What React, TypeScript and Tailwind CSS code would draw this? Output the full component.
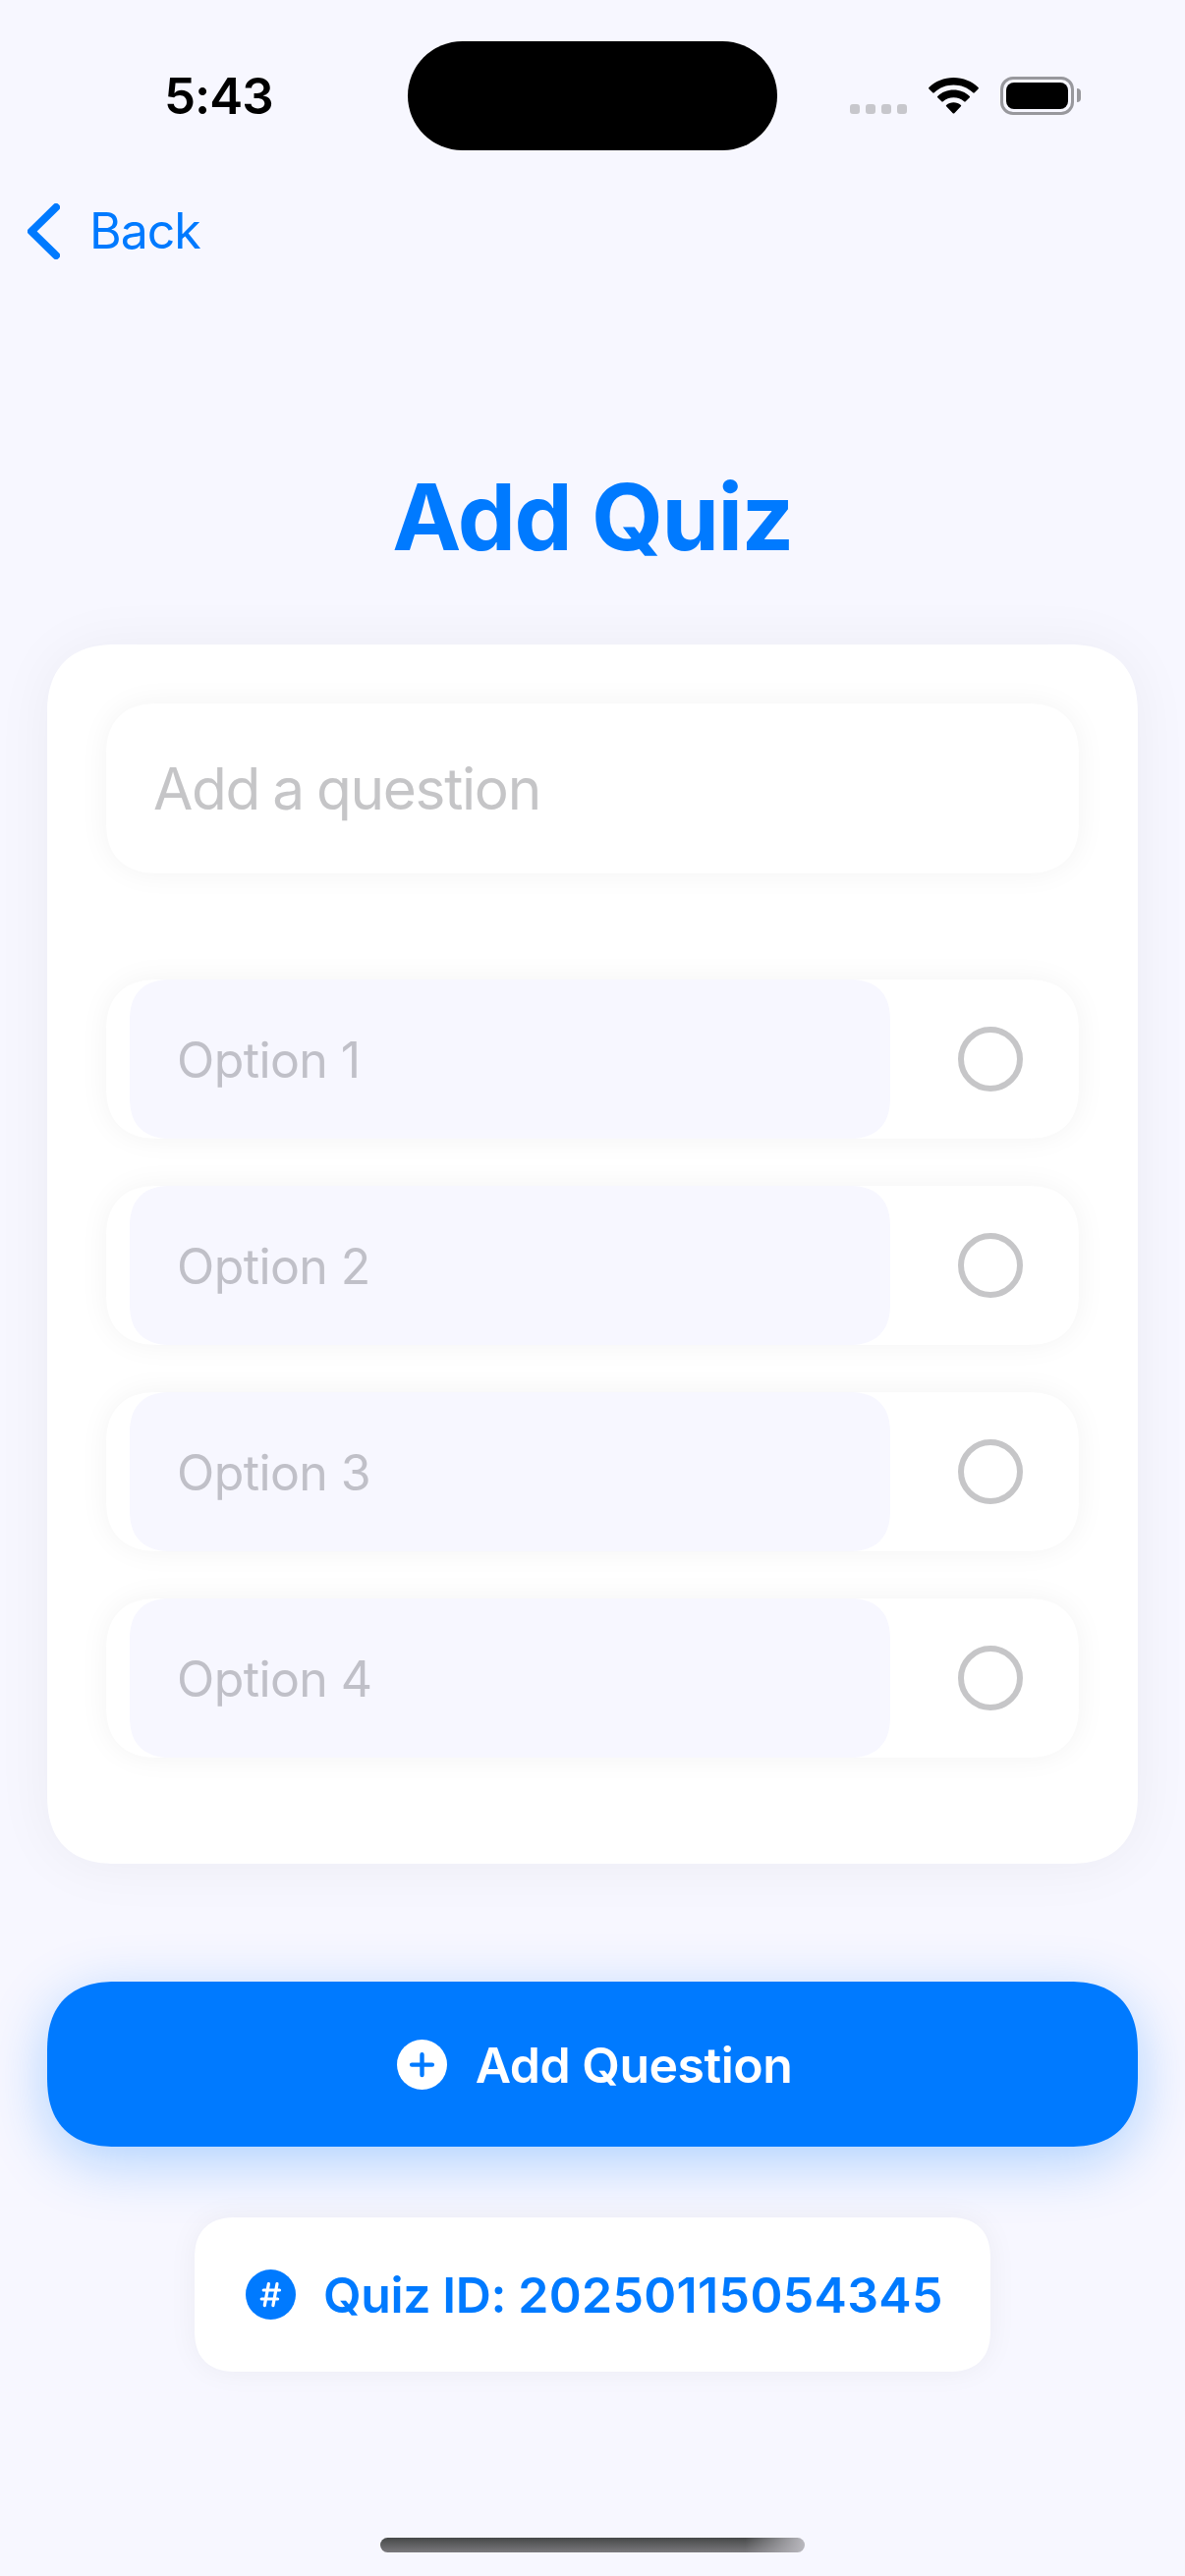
import React from "react";

const options = ["Option 1", "Option 2", "Option 3", "Option 4"];

function StatusBar() {
  return (
    <header className="relative flex h-[194px] items-center justify-between pl-[167px] pr-[106px]">
      <span className="text-[51px] font-semibold leading-none tracking-[-1px] text-black">5:43</span>
      <div className="absolute left-[414.5px] top-[41.5px] h-[111px] w-[376.5px] rounded-full bg-black" />
      <div className="flex items-center">
        <div className="mr-[22px] mt-[28px] flex gap-[6px]">
          {[0, 1, 2, 3].map((i) => (
            <span key={i} className="h-[10px] w-[10px] rounded-[3px] bg-[#c7c7cc]" />
          ))}
        </div>
        <svg className="mr-[22px] h-[37px] w-[51px]" viewBox="0 0 51 37" fill="#000">
          <path d="M25.500 0C35.200 0 44.200 3.700 50.600 10.100Q51.200 10.800 50.600 11.500L46.800 15.300Q46 16 45.200 15.300C39.900 10.300 32.900 7.600 25.500 7.600S11.100 10.300 5.800 15.300Q5 16 4.200 15.300L0.400 11.500Q-0.200 10.800 0.400 10.100C6.800 3.700 15.800 0 25.500 0Z" />
          <path d="M25.500 12.600C31.800 12.600 37.500 15 41.800 18.900Q42.500 19.600 41.800 20.300L37.700 24.300Q37 25 36.200 24.300C33.300 21.700 29.600 20.200 25.500 20.200S17.700 21.700 14.800 24.300Q14 25 13.300 24.300L9.200 20.300Q8.500 19.600 9.200 18.900C13.500 15 19.200 12.600 25.500 12.600Z" />
          <path d="M25.500 25.200C28.300 25.200 30.900 26.200 32.900 27.900Q33.600 28.600 32.900 29.300L26.300 36.200Q25.500 37 24.700 36.200L18.100 29.300Q17.400 28.600 18.100 27.900C20.100 26.200 22.700 25.200 25.500 25.200Z" />
        </svg>
        <div className="flex items-center">
          <div className="h-[39px] w-[75px] rounded-[13px] border-[3px] border-[#98989d] p-[3px]">
            <div className="h-full w-full rounded-[8px] bg-black" />
          </div>
          <div className="ml-[3px] h-[14px] w-[4px] rounded-r-full bg-[#98989d]" />
        </div>
      </div>
    </header>
  );
}

function OptionRow({ label }: { label: string }) {
  return (
    <div className="flex h-[162px] items-center rounded-[45px] bg-white pl-6 shadow-[0_0_30px_rgba(0,0,0,0.05)] supports-[corner-shape:squircle]:rounded-[54px] supports-[corner-shape:squircle]:[corner-shape:superellipse(1.31)]">
      <div className="flex h-full w-[774px] items-center rounded-[36px] bg-[#f7f7ff] px-12 supports-[corner-shape:squircle]:rounded-[43px] supports-[corner-shape:squircle]:[corner-shape:superellipse(1.31)]">
        <span className="relative top-px text-[50px] leading-none tracking-[-0.6px] text-[#c0c0c8]">{label}</span>
      </div>
      <span className="ml-[69px] h-[66px] w-[66px] rounded-full border-[6px] border-[#c6c6c8]" />
    </div>
  );
}

export default function App() {
  return (
    <div className="flex h-[2622px] w-[1206px] flex-col overflow-hidden bg-[#f7f7ff] font-['Inter',sans-serif]">
      <StatusBar />
      <nav className="flex h-[82px] items-center pl-[28px] text-[#007aff]">
        <svg className="h-[57px] w-[33px]" viewBox="0 0 33 57" fill="none" stroke="currentColor" strokeWidth="8" strokeLinecap="round" strokeLinejoin="round">
          <path d="M29 4L4 28.500L29 53" />
        </svg>
        <span className="ml-[30px] text-[50px] leading-none tracking-[-1px]">Back</span>
      </nav>

      <main className="flex flex-col items-center px-12 pt-[196px]">
        <h1 className="flex h-[108px] items-center text-[94px] font-bold leading-none tracking-[-1.5px] text-[#007aff]">Add Quiz</h1>

        <section className="mt-[76px] h-[1241px] w-full rounded-[60px] bg-white px-[60px] pt-[60px] shadow-[0_2px_60px_rgba(0,0,0,0.05)] supports-[corner-shape:squircle]:rounded-[72px] supports-[corner-shape:squircle]:[corner-shape:superellipse(1.31)]">
          <div className="flex h-[173px] items-center rounded-[45px] bg-white px-12 shadow-[0_0_30px_rgba(0,0,0,0.05)] supports-[corner-shape:squircle]:rounded-[54px] supports-[corner-shape:squircle]:[corner-shape:superellipse(1.31)]">
            <span className="relative top-px text-[58.5px] leading-none tracking-[-1.3px] text-[#c5c5c7] [word-spacing:-2px]">Add a question</span>
          </div>
          <div className="mt-[108px] flex flex-col gap-12">
            {options.map((label) => (
              <OptionRow key={label} label={label} />
            ))}
          </div>
        </section>

        <button className="mt-[120px] flex h-[168px] w-full items-center justify-center gap-[29px] rounded-[60px] bg-[#007aff] pl-1 text-white shadow-[0_15px_60px_rgba(0,122,255,0.3)] supports-[corner-shape:squircle]:rounded-[72px] supports-[corner-shape:squircle]:[corner-shape:superellipse(1.31)]">
          <svg className="h-[51px] w-[51px]" viewBox="0 0 51 51">
            <circle cx="25.500" cy="25.500" r="25.500" fill="currentColor" />
            <path d="M25.500 15.200V36M15.100 25.600H35.900" stroke="#007aff" strokeWidth="4.400" strokeLinecap="round" />
          </svg>
          <span className="relative top-px text-[50px] font-semibold leading-none tracking-[-0.5px]">Add Question</span>
        </button>

        <div className="mt-[72px] flex h-[157px] w-[810px] items-center rounded-[36px] bg-white pl-[52px] text-[#007aff] shadow-[0_0_30px_rgba(0,0,0,0.05)] supports-[corner-shape:squircle]:rounded-[43px] supports-[corner-shape:squircle]:[corner-shape:superellipse(1.31)]">
          <svg className="h-[51px] w-[51px]" viewBox="0 0 51 51">
            <circle cx="25.500" cy="25.500" r="25.500" fill="currentColor" />
            <path d="M23.400 14.600L19.300 36.600M32 14.600L27.900 36.600M18.200 21H34.500M16.200 30H32.600" stroke="#fff" strokeWidth="3.200" strokeLinecap="round" />
          </svg>
          <span className="ml-[28px] whitespace-nowrap text-[50px] font-semibold leading-none tracking-[-0.4px]">
            Quiz ID: <span className="tracking-[0.35px]">20250115054345</span>
          </span>
        </div>
      </main>

      <div className="mx-auto mt-[169px] h-[15px] w-[432px] shrink-0 rounded-full bg-[linear-gradient(90deg,transparent_86%,#b9b8be_100%),linear-gradient(180deg,#464848,#7a797d)]" />
    </div>
  );
}
